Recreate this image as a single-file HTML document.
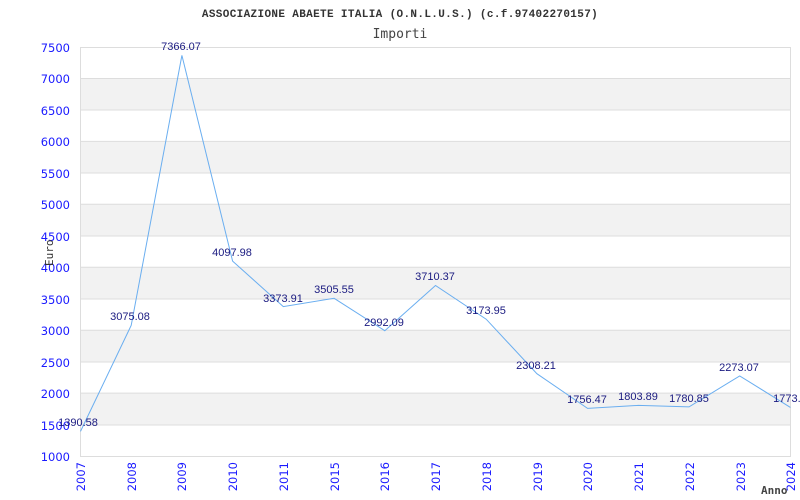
<!DOCTYPE html>
<html><head><style>body{margin:0;background:#fff}svg{display:block}</style></head><body>
<svg width="800" height="500" xmlns="http://www.w3.org/2000/svg">
<rect width="800" height="500" fill="#fff"/>
<text x="400" y="17" text-anchor="middle" font-family="Liberation Mono, monospace" font-weight="bold" font-size="11" letter-spacing="0.35" fill="#333">ASSOCIAZIONE ABAETE ITALIA (O.N.L.U.S.) (c.f.97402270157)</text>
<text x="400" y="38" text-anchor="middle" font-family="DejaVu Sans Mono, monospace" font-size="13" fill="#444">Importi</text>
<g fill="#f2f2f2">
<rect x="80.5" y="78.5" width="710" height="31.5"/><rect x="80.5" y="141.4" width="710" height="31.5"/><rect x="80.5" y="204.3" width="710" height="31.5"/><rect x="80.5" y="267.2" width="710" height="31.5"/><rect x="80.5" y="330.2" width="710" height="31.5"/><rect x="80.5" y="393.1" width="710" height="31.5"/>
</g>
<g stroke="#ddd" stroke-width="1">
<line x1="80" x2="790" y1="78.5" y2="78.5"/><line x1="80" x2="790" y1="110" y2="110"/><line x1="80" x2="790" y1="141.4" y2="141.4"/><line x1="80" x2="790" y1="173" y2="173"/><line x1="80" x2="790" y1="204.3" y2="204.3"/><line x1="80" x2="790" y1="236" y2="236"/><line x1="80" x2="790" y1="267.2" y2="267.2"/><line x1="80" x2="790" y1="299" y2="299"/><line x1="80" x2="790" y1="330.2" y2="330.2"/><line x1="80" x2="790" y1="362" y2="362"/><line x1="80" x2="790" y1="393.1" y2="393.1"/><line x1="80" x2="790" y1="425" y2="425"/>
<rect x="80.5" y="47.5" width="710" height="409" fill="none"/>
</g>
<g font-family="DejaVu Sans, sans-serif" font-size="11.5" fill="#1a1aff" text-anchor="end">
<text x="70" y="52">7500</text><text x="70" y="83">7000</text><text x="70" y="115">6500</text><text x="70" y="146">6000</text><text x="70" y="178">5500</text><text x="70" y="209">5000</text><text x="70" y="241">4500</text><text x="70" y="272">4000</text><text x="70" y="304">3500</text><text x="70" y="335">3000</text><text x="70" y="367">2500</text><text x="70" y="398">2000</text><text x="70" y="430">1500</text><text x="70" y="461">1000</text>
</g>
<g font-family="DejaVu Sans, sans-serif" font-size="11.5" fill="#1a1aff" text-anchor="end">
<text transform="translate(85,462) rotate(-90)">2007</text><text transform="translate(136,462) rotate(-90)">2008</text><text transform="translate(186,462) rotate(-90)">2009</text><text transform="translate(237,462) rotate(-90)">2010</text><text transform="translate(288,462) rotate(-90)">2011</text><text transform="translate(339,462) rotate(-90)">2015</text><text transform="translate(389,462) rotate(-90)">2016</text><text transform="translate(440,462) rotate(-90)">2017</text><text transform="translate(491,462) rotate(-90)">2018</text><text transform="translate(542,462) rotate(-90)">2019</text><text transform="translate(592,462) rotate(-90)">2020</text><text transform="translate(643,462) rotate(-90)">2021</text><text transform="translate(694,462) rotate(-90)">2022</text><text transform="translate(745,462) rotate(-90)">2023</text><text transform="translate(795,462) rotate(-90)">2024</text>
</g>
<text transform="translate(53,266) rotate(-90)" font-family="DejaVu Sans Mono, monospace" font-size="11" fill="#333">Euro</text>
<text x="761" y="494" font-family="DejaVu Sans Mono, monospace" font-size="11" font-weight="bold" fill="#444">Anno</text>
<polyline fill="none" stroke="#6aaef0" stroke-width="1" points="80.5,431.4 131.2,325.4 181.9,55.4 232.6,261.1 283.3,306.6 334.1,298.3 384.8,330.7 435.5,285.5 486.2,319.2 536.9,373.7 587.6,408.4 638.3,405.4 689,406.9 739.7,375.9 790.4,407.4"/>
<g font-family="Liberation Sans, sans-serif" font-size="11" fill="#1a1a80" text-anchor="middle">
<text x="78" y="426">1390.58</text><text x="130" y="320">3075.08</text><text x="181" y="50">7366.07</text><text x="232" y="256">4097.98</text><text x="283" y="302">3373.91</text><text x="334" y="293">3505.55</text><text x="384" y="326">2992.09</text><text x="435" y="280">3710.37</text><text x="486" y="314">3173.95</text><text x="536" y="369">2308.21</text><text x="587" y="403">1756.47</text><text x="638" y="400">1803.89</text><text x="689" y="402">1780.85</text><text x="739" y="371">2273.07</text><text x="790" y="402">1773.9</text>
</g>
</svg>
</body></html>
